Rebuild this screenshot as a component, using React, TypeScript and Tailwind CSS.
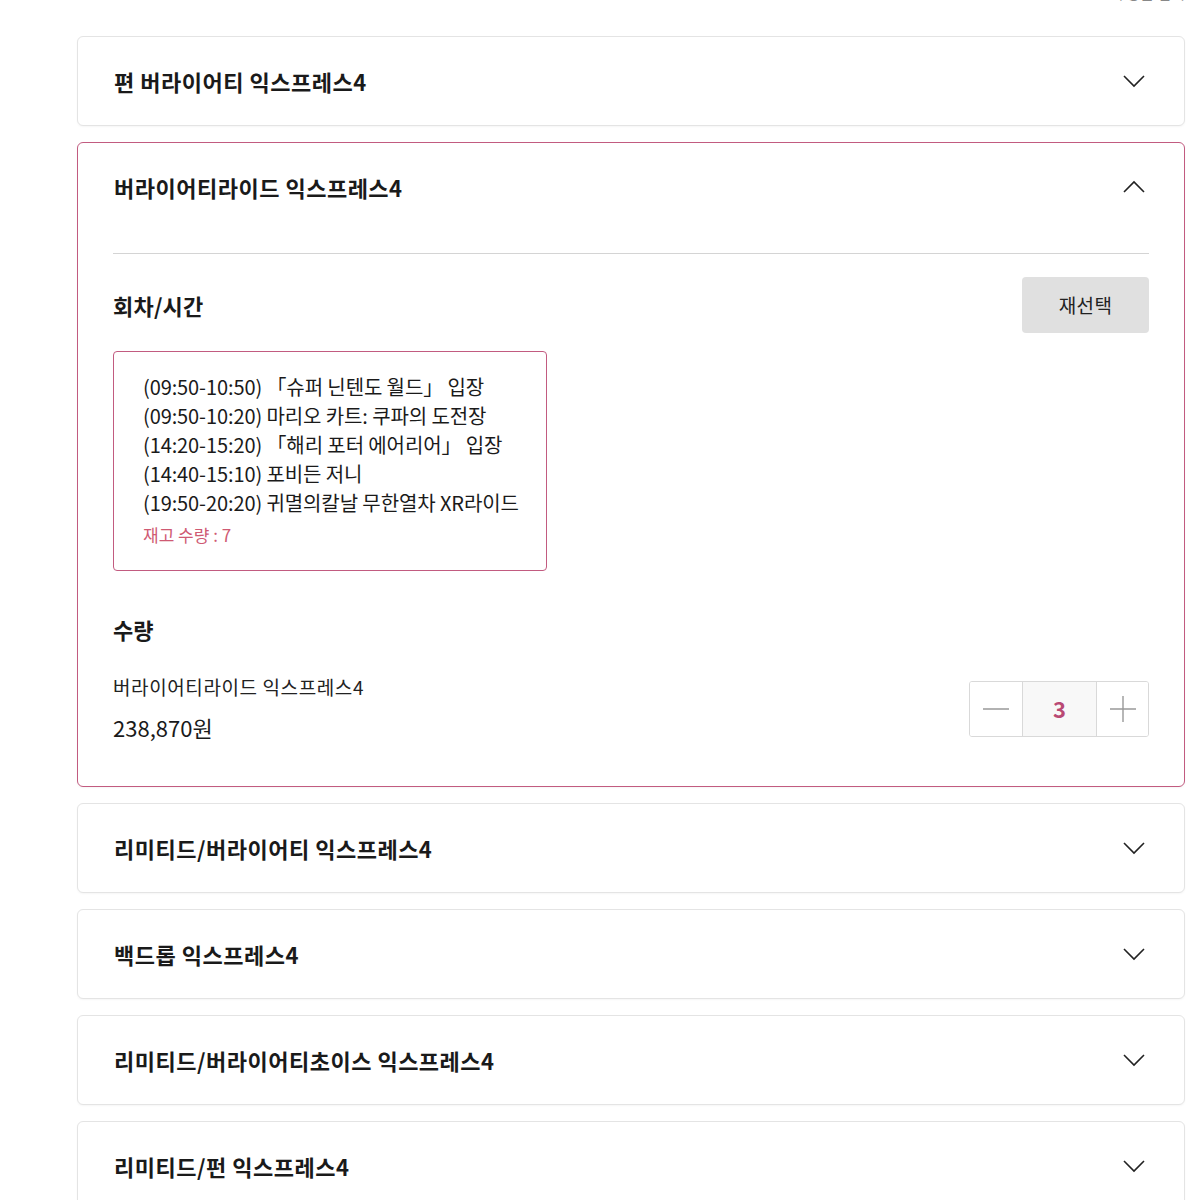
import { useState } from 'react';

const FONT = { fontFamily: '"Noto Sans CJK KR", "Noto Sans", sans-serif' };

const products = [
    '편 버라이어티 익스프레스4',
    '버라이어티라이드 익스프레스4',
    '리미티드/버라이어티 익스프레스4',
    '백드롭 익스프레스4',
    '리미티드/버라이어티초이스 익스프레스4',
    '리미티드/펀 익스프레스4',
];

const schedule = [
    '(09:50-10:50) 「슈퍼 닌텐도 월드」 입장',
    '(09:50-10:20) 마리오 카트: 쿠파의 도전장',
    '(14:20-15:20) 「해리 포터 에어리어」 입장',
    '(14:40-15:10) 포비든 저니',
    '(19:50-20:20) 귀멸의칼날 무한열차 XR라이드',
];

function Chevron({ up }: { up?: boolean }) {
    return (
        <svg width="24" height="14" viewBox="0 0 24 14" fill="none" className="shrink-0">
            <polyline
                points={up ? '2,12 12,2 22,12' : '2,2 12,12 22,2'}
                stroke="#222"
                strokeWidth="1.6"
                fill="none"
            />
        </svg>
    );
}

export default function App() {
    const [open, setOpen] = useState(1);
    const [qty, setQty] = useState(3);

    return (
        <div className="min-h-[1200px] bg-white overflow-hidden" style={FONT}>
            <div className="ml-[77px] w-[1108px]">
                <div className="flex justify-between items-end h-[30px] -mt-[26px] mb-[32px]">
                    <span className="text-[24px] font-bold text-[#222] pl-[4px]">상품 선택</span>
                    <span className="text-[15px] text-[#888]">전체 상품 접기</span>
                </div>

                <div className="flex flex-col gap-[16px]">
                    {products.map((name, i) => {
                        const isOpen = open === i;
                        return (
                            <div
                                key={name}
                                className={`rounded-[6px] border bg-white ${isOpen ? 'border-[#c25b80]' : 'border-[#e4e4e4]'} shadow-[0_1px_2px_rgba(0,0,0,0.04)]`}
                            >
                                <button
                                    onClick={() => setOpen(isOpen ? -1 : i)}
                                    className="w-full h-[88px] pl-[36px] pr-[38px] flex items-center justify-between"
                                >
                                    <span className="text-[22px] font-bold text-[#1a1a1a] tracking-[0.5px]">{name}</span>
                                    <Chevron up={isOpen} />
                                </button>

                                {isOpen && (
                                    <div className="px-[35px] pb-[43px]">
                                        <div className="mt-[22px] border-t border-[#d4d4d4]" />

                                        <div className="mt-[23px] flex items-center justify-between">
                                            <span className="text-[22px] font-bold text-[#1a1a1a] tracking-[0.2px]">회차/시간</span>
                                            <button className="w-[127px] h-[56px] rounded-[4px] bg-[#e0e0e0] text-[19px] text-[#222] tracking-[0.3px]">
                                                재선택
                                            </button>
                                        </div>

                                        <div className="mt-[18px] w-[434px] rounded-[4px] border border-[#c25b80] pl-[29px] pr-[16px] pt-[20px] pb-[23px]">
                                            {schedule.map((s) => (
                                                <div key={s} className="text-[20px] leading-[29px] text-[#1a1a1a] tracking-[-0.1px] whitespace-nowrap">
                                                    {s}
                                                </div>
                                            ))}
                                            <div className="mt-[6px] text-[17px] leading-[24px] text-[#cf5a73]">재고 수량 : 7</div>
                                        </div>

                                        <div className="mt-[43px] text-[22px] leading-[30px] font-bold text-[#1a1a1a]">수량</div>

                                        <div className="mt-[30px] flex items-center justify-between">
                                            <div>
                                                <div className="text-[19px] leading-[26px] text-[#222] tracking-[0.6px]">버라이어티라이드 익스프레스4</div>
                                                <div className="mt-[11px] text-[22px] leading-[32px] text-[#1a1a1a]">238,870원</div>
                                            </div>
                                            <div className="flex h-[56px] rounded-[3px] border border-[#d9d9d9] overflow-hidden">
                                                <button
                                                    onClick={() => setQty(Math.max(1, qty - 1))}
                                                    className="w-[52px] flex items-center justify-center bg-white"
                                                >
                                                    <svg width="26" height="2" viewBox="0 0 26 2">
                                                        <line x1="0" y1="1" x2="26" y2="1" stroke="#999" strokeWidth="1.4" />
                                                    </svg>
                                                </button>
                                                <div className="w-[75px] flex items-center justify-center bg-[#f8f8f8] border-x border-[#d9d9d9] text-[22px] font-bold text-[#b94a74]">
                                                    {qty}
                                                </div>
                                                <button
                                                    onClick={() => setQty(qty + 1)}
                                                    className="w-[51px] flex items-center justify-center bg-white"
                                                >
                                                    <svg width="26" height="26" viewBox="0 0 26 26">
                                                        <line x1="0" y1="13" x2="26" y2="13" stroke="#999" strokeWidth="1.4" />
                                                        <line x1="13" y1="0" x2="13" y2="26" stroke="#999" strokeWidth="1.4" />
                                                    </svg>
                                                </button>
                                            </div>
                                        </div>
                                    </div>
                                )}
                            </div>
                        );
                    })}
                </div>
            </div>
        </div>
    );
}
